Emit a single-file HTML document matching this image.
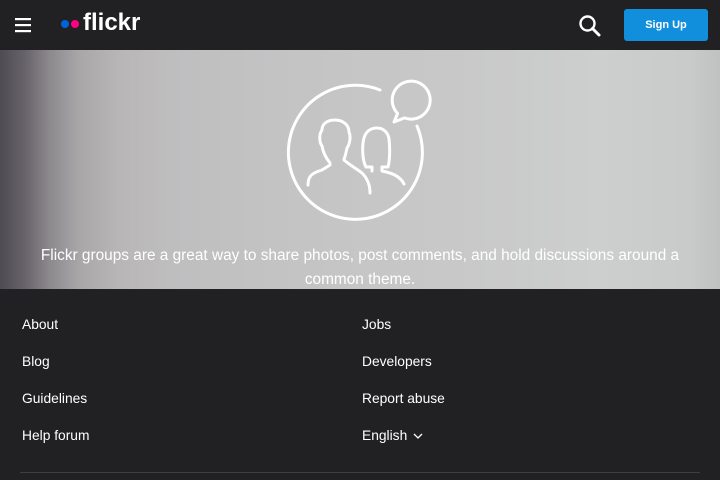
<!DOCTYPE html>
<html><head><meta charset="utf-8"><style>
*{margin:0;padding:0;box-sizing:border-box}
body{width:720px;height:480px;overflow:hidden;background:#212124;font-family:"Liberation Sans",sans-serif;color:#fff}
.top{position:absolute;left:0;top:0;width:720px;height:50px;background:#212124}
.hero{position:absolute;left:0;top:50px;width:720px;height:239px;
background:linear-gradient(90deg,#4f4b52 0px,#67636a 25px,#8d8a8e 50px,#a9a7a8 80px,#b8b6b7 120px,#bfbebf 170px,#c4c4c5 300px,#c8c8c8 450px,#cdcece 600px,#c9caca 690px,#c0c1c1 720px)}
.hero p{position:absolute;left:0;width:720px;top:194px;text-align:center;font-size:15.4px;line-height:24px;color:#fff}
.f{position:absolute;font-size:13.8px;color:#fff}
.btn{position:absolute;left:624px;top:9px;width:84px;height:32px;background:#128fdc;border-radius:3px;font-size:11px;font-weight:bold;text-align:center;line-height:32px}
</style></head><body>
<div class="top">
<svg style="position:absolute;left:15px;top:17px" width="18" height="16"><rect y="1" width="16" height="2.2" fill="#fff"/><rect y="7" width="16" height="2.2" fill="#fff"/><rect y="13" width="16" height="2.2" fill="#fff"/></svg>
<div style="position:absolute;left:61px;top:20px;width:8px;height:8px;border-radius:50%;background:#0063dc"></div>
<div style="position:absolute;left:71px;top:20px;width:8px;height:8px;border-radius:50%;background:#ff0084"></div>
<div style="position:absolute;left:83px;top:9px;font-size:24px;font-weight:bold;line-height:28px">flickr</div>
<svg style="position:absolute;left:578px;top:14px" width="24" height="24"><circle cx="9.5" cy="9.5" r="7" stroke="#fff" stroke-width="2.4" fill="none"/><path d="M14.5 14.5L21 21" stroke="#fff" stroke-width="3" stroke-linecap="round"/></svg>
<div class="btn">Sign Up</div>
</div>
<div class="hero">
<svg style="position:absolute;left:0;top:-50px" width="720" height="240" fill="none" stroke="#fff" stroke-width="3" stroke-linecap="round" stroke-linejoin="round">
<path d="M380 90A67 67 0 1 0 417 126"/>
<path d="M397.6 113.4A19 19 0 1 1 404.5 117.9L394 122Z"/>
<path d="M330 163C326 158 323 152 322 146C319 142 319 134 322 130C322 124 327 120 335 120C343 120 349 125 349 132C351 136 350 144 347 148C346 153 345 157 344 159"/>
<path d="M308 185C308 176 312 173 322 170L330 165"/>
<path d="M344 160C351 166 357 169 362 173C367 178 370 185 370 193"/>
<path d="M372 167L366 167C362 160 362 145 364 138C366 131 371 128 377 128C383 128 388 132 389 139C390 147 390 160 388 167L382 167"/>
<path d="M372 167L372 171M382 167L382 171C392 173 400 176 404 184"/>
</svg>
<p>Flickr groups are a great way to share photos, post comments, and hold discussions around a<br>common theme.</p>
</div>
<div class="f" style="left:22px;top:317px">About</div>
<div class="f" style="left:22px;top:354px">Blog</div>
<div class="f" style="left:22px;top:391px">Guidelines</div>
<div class="f" style="left:22px;top:428px">Help forum</div>
<div class="f" style="left:362px;top:317px">Jobs</div>
<div class="f" style="left:362px;top:354px">Developers</div>
<div class="f" style="left:362px;top:391px">Report abuse</div>
<div class="f" style="left:362px;top:428px">English <svg width="10" height="8" style="margin-left:2px"><path d="M1 2l4 4 4-4" stroke="#fff" stroke-width="1.3" fill="none"/></svg></div>
<div style="position:absolute;left:20px;top:472px;width:680px;height:1px;background:#3e3e42"></div>
</body></html>
